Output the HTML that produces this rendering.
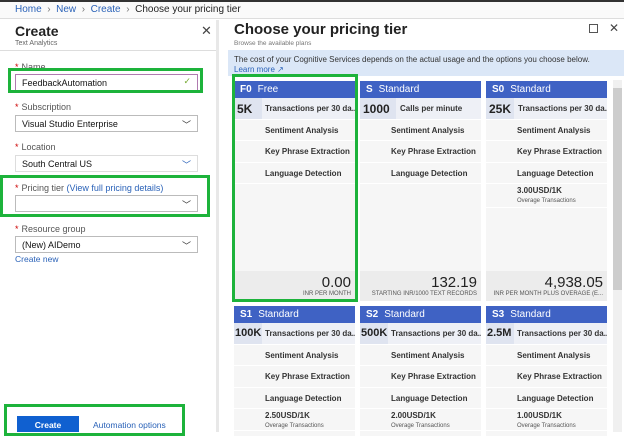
<!DOCTYPE html>
<html><head><style>
*{margin:0;padding:0;box-sizing:border-box}
body{width:624px;height:432px;overflow:hidden;background:#fff;font-family:"Liberation Sans",sans-serif;position:relative;color:#222}
.a{position:absolute}
.lbl{font-size:9px;color:#555}
.lbl b{color:#c00;font-weight:normal;margin-right:3px}
.inp{position:absolute;left:15px;width:183px;height:17px;border:1px solid #bbb;font-size:9px;padding:3px 6px;color:#111;background:#fff}
.chev{position:absolute;right:6px;top:2px;font-size:9px;color:#333}
.g{position:absolute;border:3px solid #1db33b}
.card{position:absolute;background:#f6f6f6;width:121px}
.hd{height:17px;background:#3f62c4;color:#fff;font-size:10px;padding:3px 6px}
.hd b{margin-right:6px}
.r{height:21.5px;border-bottom:1px solid #fff;font-size:8px;font-weight:bold;color:#333;padding:6px 0 0 31px;position:relative;white-space:nowrap;overflow:hidden}
.r1{background:#eef0f6}
.r1 span{position:absolute;left:0;top:0;height:21px;padding:4px 0 0 3px;font-size:12px;color:#222;background:#dfe4f0;width:28px}
.pr{position:absolute;right:4px;text-align:right}
</style></head><body>
<div class="a" style="left:0;top:0;width:624px;height:2px;background:#333"></div>
<div class="a" style="left:0;top:2px;width:624px;height:17px;background:#fafafa;border-bottom:1px solid #ddd"></div>
<div class="a" style="left:15px;top:4px;font-size:10px;color:#2a62b8">Home &nbsp;<span style="color:#777">›</span>&nbsp; New &nbsp;<span style="color:#777">›</span>&nbsp; Create &nbsp;<span style="color:#777">›</span>&nbsp; <span style="color:#222">Choose your pricing tier</span></div>
<div class="a" style="left:216px;top:20px;width:3px;height:412px;background:#e8e8e8"></div>
<div class="a" style="left:15px;top:23px;font-size:14px;font-weight:bold">Create</div>
<div class="a" style="left:15px;top:40px;font-size:7px;color:#666">Text Analytics</div>
<div class="a" style="left:201px;top:23px;font-size:13px;color:#444">✕</div>
<div class="a" style="left:0;top:50px;width:216px;height:1px;background:#ddd"></div>
<div class="a lbl" style="left:15px;top:62px"><b>*</b>Name</div>
<div class="inp" style="top:74px;border-color:#b07ab0">FeedbackAutomation<span class="chev" style="color:#7a3;top:1px">✓</span></div>
<div class="a lbl" style="left:15px;top:102px"><b>*</b>Subscription</div>
<div class="inp" style="top:115px">Visual Studio Enterprise<span class="chev">﹀</span></div>
<div class="a lbl" style="left:15px;top:142px"><b>*</b>Location</div>
<div class="inp" style="top:155px;border-color:#ddd">South Central US<span class="chev" style="color:#2a62b8">﹀</span></div>
<div class="a lbl" style="left:15px;top:183px"><b>*</b>Pricing tier <span style="color:#2a62b8">(View full pricing details)</span></div>
<div class="inp" style="top:195px"><span class="chev">﹀</span></div>
<div class="a lbl" style="left:15px;top:224px"><b>*</b>Resource group</div>
<div class="inp" style="top:236px">(New) AIDemo<span class="chev">﹀</span></div>
<div class="a" style="left:15px;top:254px;font-size:8.5px;color:#2a62b8">Create new</div>
<div class="a" style="left:17px;top:416px;width:62px;height:16px;background:#1060d0;color:#fff;font-size:8.5px;font-weight:bold;text-align:center;padding-top:4px">Create</div>
<div class="a" style="left:93px;top:420px;font-size:8.5px;color:#2a62b8">Automation options</div>
<div class="g" style="left:8px;top:68px;width:195px;height:25px"></div>
<div class="g" style="left:0;top:175px;width:210px;height:42px"></div>
<div class="g" style="left:4px;top:404px;width:181px;height:32px"></div>

<div class="a" style="left:234px;top:21px;font-size:15px;font-weight:bold">Choose your pricing tier</div>
<div class="a" style="left:234px;top:40px;font-size:6.5px;color:#777">Browse the available plans</div>
<div class="a" style="left:589px;top:24px;width:9px;height:9px;border:1px solid #555"></div>
<div class="a" style="left:609px;top:21px;font-size:12px;color:#444">✕</div>
<div class="a" style="left:228px;top:50px;width:396px;height:26px;background:#dbe7f7"></div>
<div class="a" style="left:234px;top:55px;font-size:8px;color:#333">The cost of your Cognitive Services depends on the actual usage and the options you choose below.</div>
<div class="a" style="left:234px;top:65px;font-size:8px;color:#2a62b8">Learn more ↗</div>
<div class="a" style="left:613px;top:80px;width:9px;height:352px;background:#f0f0f0"></div>
<div class="a" style="left:613px;top:88px;width:9px;height:202px;background:#cdcdcd"></div>

<div class="card" style="left:234px;top:81px;height:220px"><div class="hd"><b>F0</b>Free</div>
<div class="r r1"><span>5K</span>Transactions per 30 da...</div><div class="r">Sentiment Analysis</div><div class="r">Key Phrase Extraction</div><div class="r">Language Detection</div>
<div class="a" style="left:0;top:190px;width:121px;height:30px;background:#ececec"></div>
<div class="pr" style="top:193px;font-size:15px">0.00</div><div class="pr" style="top:210px;font-size:6px;color:#555">INR PER MONTH</div></div>
<div class="card" style="left:360px;top:81px;height:220px"><div class="hd"><b>S</b>Standard</div>
<div class="r r1" style="padding-left:40px"><span style="width:36px">1000</span>Calls per minute</div><div class="r">Sentiment Analysis</div><div class="r">Key Phrase Extraction</div><div class="r">Language Detection</div>
<div class="a" style="left:0;top:190px;width:121px;height:30px;background:#ececec"></div>
<div class="pr" style="top:193px;font-size:15px">132.19</div><div class="pr" style="top:210px;font-size:6px;color:#555">STARTING INR/1000 TEXT RECORDS</div></div>
<div class="card" style="left:486px;top:81px;height:220px"><div class="hd"><b>S0</b>Standard</div>
<div class="r r1" style="padding-left:32px"><span>25K</span>Transactions per 30 da...</div><div class="r">Sentiment Analysis</div><div class="r">Key Phrase Extraction</div><div class="r">Language Detection</div>
<div class="r" style="padding-top:2px;height:24px">3.00USD/1K<br><span style="font-weight:normal;font-size:6px;color:#555">Overage Transactions</span></div>
<div class="a" style="left:0;top:190px;width:121px;height:30px;background:#ececec"></div>
<div class="pr" style="top:193px;font-size:15px">4,938.05</div><div class="pr" style="top:210px;font-size:6px;color:#555">INR PER MONTH PLUS OVERAGE (E...</div></div>

<div class="card" style="left:234px;top:306px;height:130px"><div class="hd"><b>S1</b>Standard</div>
<div class="r r1"><span style="font-size:11px;padding-left:1px">100K</span>Transactions per 30 da...</div><div class="r">Sentiment Analysis</div><div class="r">Key Phrase Extraction</div><div class="r">Language Detection</div>
<div class="r" style="padding-top:2px">2.50USD/1K<br><span style="font-weight:normal;font-size:6px;color:#555">Overage Transactions</span></div></div>
<div class="card" style="left:360px;top:306px;height:130px"><div class="hd"><b>S2</b>Standard</div>
<div class="r r1"><span style="font-size:11px;padding-left:1px">500K</span>Transactions per 30 da...</div><div class="r">Sentiment Analysis</div><div class="r">Key Phrase Extraction</div><div class="r">Language Detection</div>
<div class="r" style="padding-top:2px">2.00USD/1K<br><span style="font-weight:normal;font-size:6px;color:#555">Overage Transactions</span></div></div>
<div class="card" style="left:486px;top:306px;height:130px"><div class="hd"><b>S3</b>Standard</div>
<div class="r r1"><span style="font-size:11px;padding-left:1px">2.5M</span>Transactions per 30 da...</div><div class="r">Sentiment Analysis</div><div class="r">Key Phrase Extraction</div><div class="r">Language Detection</div>
<div class="r" style="padding-top:2px">1.00USD/1K<br><span style="font-weight:normal;font-size:6px;color:#555">Overage Transactions</span></div></div>
<div class="g" style="left:232px;top:74px;width:126px;height:228px"></div>
</body></html>
